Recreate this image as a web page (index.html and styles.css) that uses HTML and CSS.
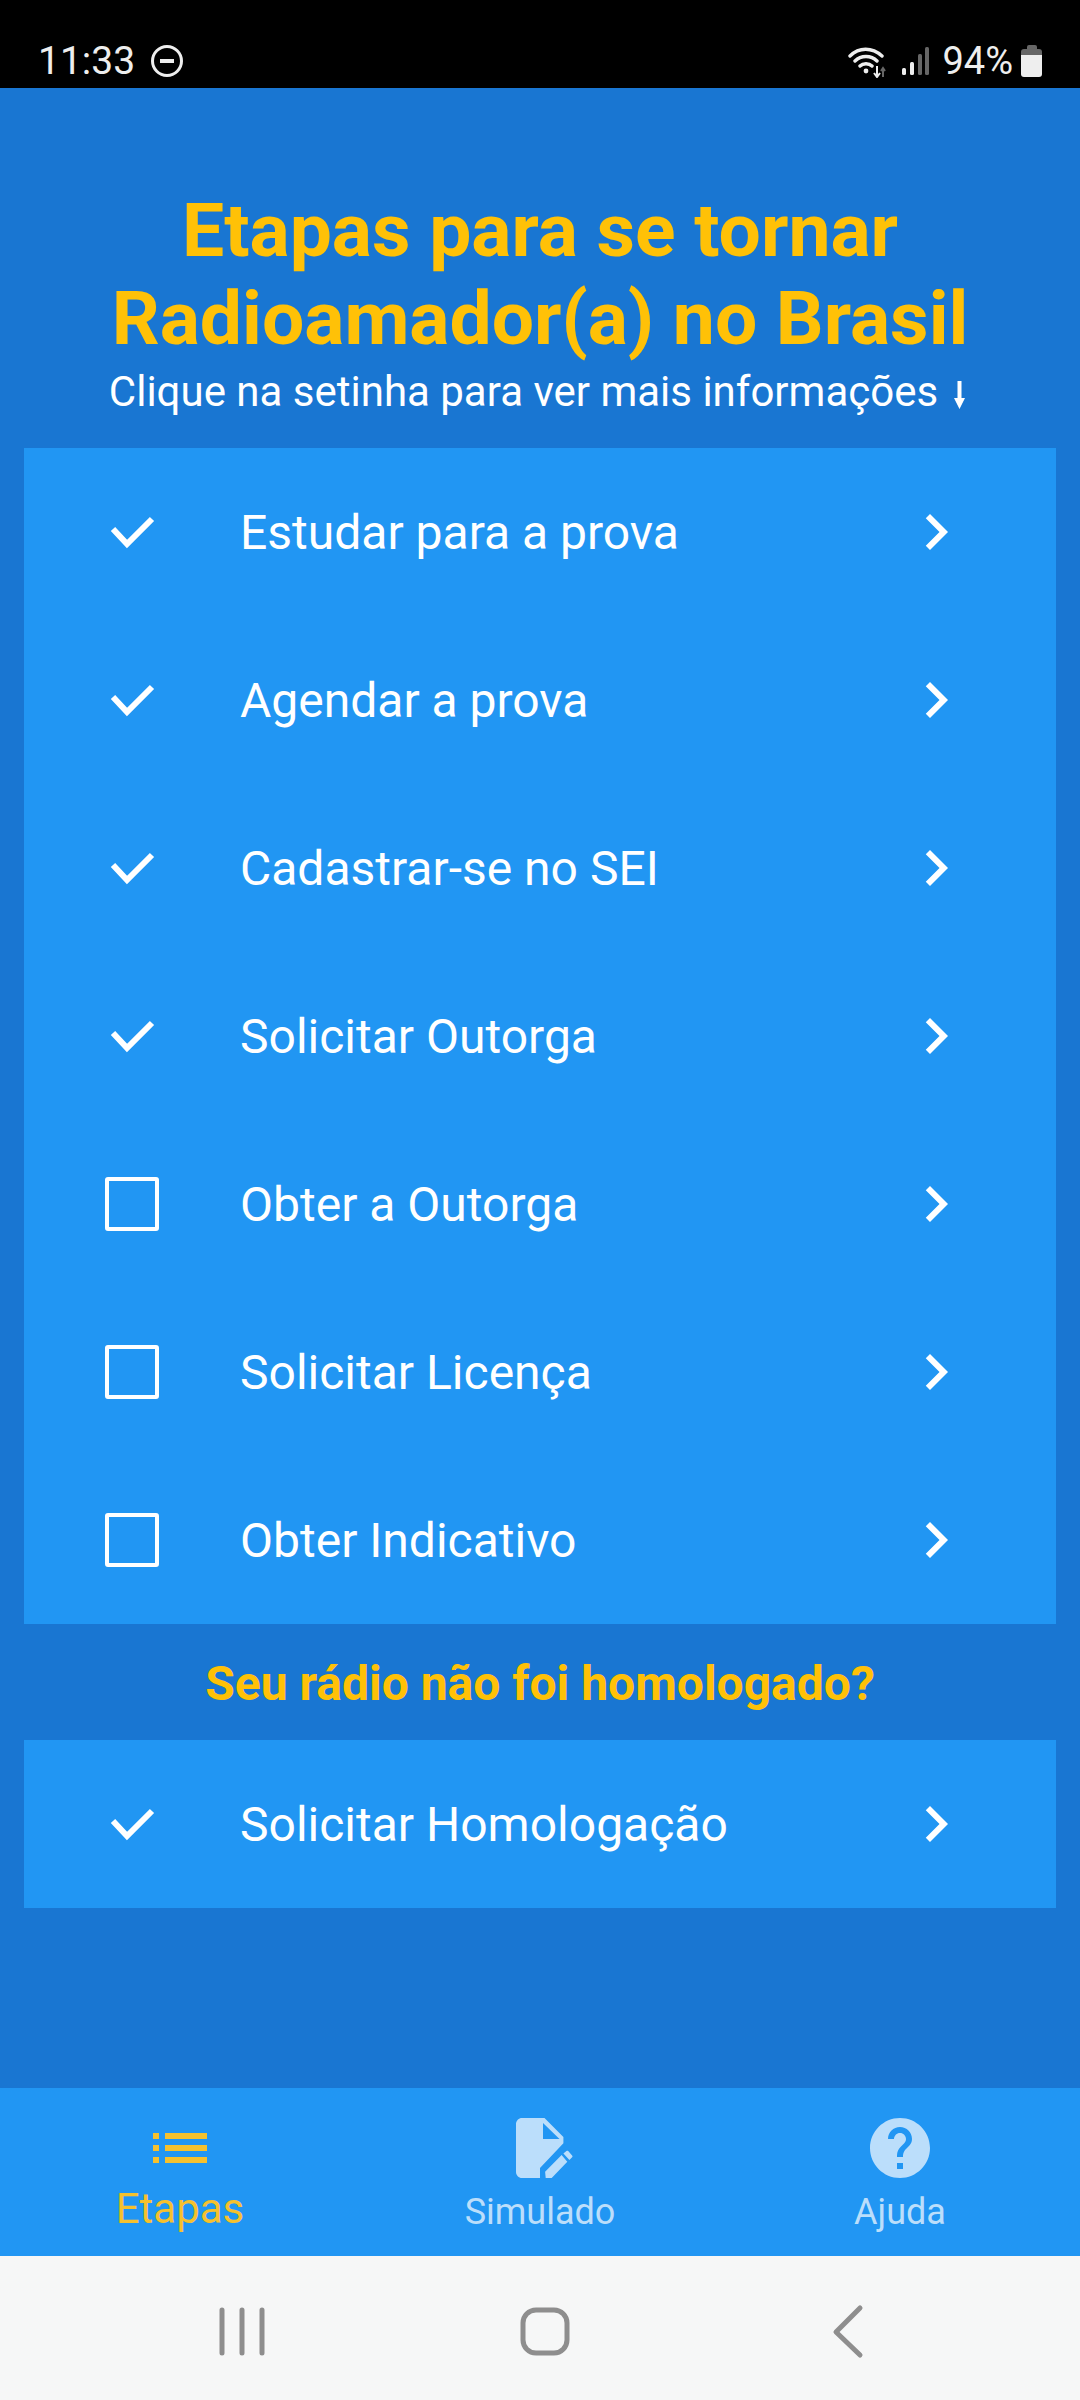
FILE: index.html
```html
<!DOCTYPE html>
<html lang="pt-BR">
<head>
    <meta charset="UTF-8">
    <meta name="viewport" content="width=device-width, initial-scale=1.0">
    <title>Etapas</title>
    <link rel="stylesheet" href="styles.css">
</head>
<body>
    <div id="app">
        <!-- Status bar -->
        <div class="status-bar">
            <div class="status-left">
                <span class="clock">11:33</span>
                <span class="dnd"></span>
            </div>
            <div class="status-right">
                <svg class="wifi" viewBox="0 0 38 33" width="38" height="33">
                    <path d="M2 11C11 2 24 2 34 11M7 16C13 10 23 10 29 16M12 21C15 18 21 18 24 21" fill="none" stroke="#eee" stroke-width="3.4" stroke-linecap="round"/>
                    <circle cx="18" cy="26" r="2.4" fill="#eee"/>
                    <path d="M29 21V31M26 28L29 32L32 28" fill="none" stroke="#eee" stroke-width="2"/>
                    <path d="M35 32V24M33 26L35 23L37 26" fill="none" stroke="#666" stroke-width="2"/>
                </svg>
                <svg class="signal" viewBox="0 0 28 30" width="28" height="30">
                    <rect x="1" y="22" width="4" height="7" rx="1.5" fill="#eee"/>
                    <rect x="9" y="16" width="4" height="13" rx="1.5" fill="#eee"/>
                    <rect x="17" y="8" width="4" height="21" rx="1.5" fill="#666"/>
                    <rect x="24" y="1" width="4" height="28" rx="1.5" fill="#666"/>
                </svg>
                <span class="battery-text">94%</span>
                <span class="battery"><span class="battery-cap"></span><span class="battery-fill"></span></span>
            </div>
        </div>

        <!-- Main content -->
        <main>
            <h1>Etapas para se tornar<br>Radioamador(a) no Brasil</h1>
            <p class="hint">Clique na setinha para ver mais informações<svg class="hint-arrow" viewBox="0 0 11 28"><path d="M3.5 0h4v17H11L5.5 28 0 17h3.5z"/></svg></p>

            <section class="step-panel">
                <div class="step">
                    <span class="step-mark"><svg viewBox="0 0 72 72"><path class="tick" d="M17 33L31 48L56 23"/></svg></span>
                    <span class="step-name">Estudar para a prova</span>
                    <svg class="chevron" viewBox="0 0 24 24"><path d="M10 6L8.59 7.41 13.17 12l-4.58 4.59L10 18l6-6z"/></svg>
                </div>
                <div class="step">
                    <span class="step-mark"><svg viewBox="0 0 72 72"><path class="tick" d="M17 33L31 48L56 23"/></svg></span>
                    <span class="step-name">Agendar a prova</span>
                    <svg class="chevron" viewBox="0 0 24 24"><path d="M10 6L8.59 7.41 13.17 12l-4.58 4.59L10 18l6-6z"/></svg>
                </div>
                <div class="step">
                    <span class="step-mark"><svg viewBox="0 0 72 72"><path class="tick" d="M17 33L31 48L56 23"/></svg></span>
                    <span class="step-name">Cadastrar-se no SEI</span>
                    <svg class="chevron" viewBox="0 0 24 24"><path d="M10 6L8.59 7.41 13.17 12l-4.58 4.59L10 18l6-6z"/></svg>
                </div>
                <div class="step">
                    <span class="step-mark"><svg viewBox="0 0 72 72"><path class="tick" d="M17 33L31 48L56 23"/></svg></span>
                    <span class="step-name">Solicitar Outorga</span>
                    <svg class="chevron" viewBox="0 0 24 24"><path d="M10 6L8.59 7.41 13.17 12l-4.58 4.59L10 18l6-6z"/></svg>
                </div>
                <div class="step">
                    <span class="step-mark"><span class="box"></span></span>
                    <span class="step-name">Obter a Outorga</span>
                    <svg class="chevron" viewBox="0 0 24 24"><path d="M10 6L8.59 7.41 13.17 12l-4.58 4.59L10 18l6-6z"/></svg>
                </div>
                <div class="step">
                    <span class="step-mark"><span class="box"></span></span>
                    <span class="step-name">Solicitar Licença</span>
                    <svg class="chevron" viewBox="0 0 24 24"><path d="M10 6L8.59 7.41 13.17 12l-4.58 4.59L10 18l6-6z"/></svg>
                </div>
                <div class="step">
                    <span class="step-mark"><span class="box"></span></span>
                    <span class="step-name">Obter Indicativo</span>
                    <svg class="chevron" viewBox="0 0 24 24"><path d="M10 6L8.59 7.41 13.17 12l-4.58 4.59L10 18l6-6z"/></svg>
                </div>
            </section>

            <h2>Seu rádio não foi homologado?</h2>

            <section class="step-panel">
                <div class="step">
                    <span class="step-mark"><svg viewBox="0 0 72 72"><path class="tick" d="M17 33L31 48L56 23"/></svg></span>
                    <span class="step-name">Solicitar Homologação</span>
                    <svg class="chevron" viewBox="0 0 24 24"><path d="M10 6L8.59 7.41 13.17 12l-4.58 4.59L10 18l6-6z"/></svg>
                </div>
            </section>
        </main>

        <!-- Bottom tabs -->
        <nav class="tabs">
            <button class="tab active">
                <svg viewBox="0 0 24 24"><path d="M3 13h2v-2H3v2zm0 4h2v-2H3v2zm0-8h2V7H3v2zm4 4h14v-2H7v2zm0 4h14v-2H7v2zM7 7v2h14V7H7z"/></svg>
                <span>Etapas</span>
            </button>
            <button class="tab">
                <svg viewBox="0 0 24 24">
                    <path fill-rule="evenodd" d="M6 2h7.5l6.3 6.3v2.1L12 18.7V22H6c-1.1 0-2-.9-2-2V4c0-1.1.9-2 2-2zM13 3.7V9h5.5z"/>
                    <path d="M13.9 22l-.2-2.1 5.5-5.6 1.9 2.3-5.2 5.4zM19.8 13.8l1-.8c.2-.1.4-.1.6 0l1.3 1.5c.2.2.2.4 0 .6l-.9.9z"/>
                </svg>
                <span>Simulado</span>
            </button>
            <button class="tab">
                <svg viewBox="0 0 24 24"><path d="M12 2C6.48 2 2 6.48 2 12s4.48 10 10 10 10-4.48 10-10S17.52 2 12 2zm1 17h-2v-2h2v2zm2.07-7.75l-.9.92C13.45 12.9 13 13.5 13 15h-2v-.5c0-1.1.45-2.1 1.17-2.83l1.24-1.26c.37-.36.59-.86.59-1.41 0-1.1-.9-2-2-2s-2 .9-2 2H8c0-2.21 1.79-4 4-4s4 1.79 4 4c0 .88-.36 1.68-.93 2.25z"/></svg>
                <span>Ajuda</span>
            </button>
        </nav>

        <!-- System navigation -->
        <div class="system-nav">
            <svg viewBox="0 0 360 144"><path d="M222 54V97M242 54V97M262 54V97"/></svg>
            <svg viewBox="0 0 360 144"><rect x="163" y="54" width="44" height="43" rx="13"/></svg>
            <svg viewBox="0 0 360 144"><path d="M140 52L116 76L140 99"/></svg>
        </div>
    </div>
</body>
</html>
```

FILE: styles.css
```css
/* General */
body {
    margin: 0;
    font-family: Roboto, "Liberation Sans", sans-serif;
    background-color: #1976d2;
}

#app {
    display: flex;
    flex-direction: column;
    height: 2400px;
    overflow: hidden;
}

/* Status bar */
.status-bar {
    display: flex;
    justify-content: space-between;
    align-items: center;
    height: 88px;
    padding: 34px 38px 0 38px;
    box-sizing: border-box;
    background-color: #000;
    color: #eee;
}

.status-left,
.status-right {
    display: flex;
    align-items: center;
}

.clock {
    font-size: 39px;
    margin-right: 16px;
}

.dnd {
    position: relative;
    width: 32px;
    height: 32px;
    box-sizing: border-box;
    border: 3px solid #eee;
    border-radius: 50%;
}

.dnd::after {
    content: "";
    position: absolute;
    left: 6px;
    right: 6px;
    top: 11px;
    height: 4px;
    background-color: #eee;
}

.wifi {
    margin-right: 15px;
}

.signal {
    margin-right: 13px;
}

.battery-text {
    font-size: 38px;
    margin-right: 8px;
}

.battery {
    display: flex;
    flex-direction: column;
    align-items: center;
    width: 21px;
}

.battery-cap {
    width: 10px;
    height: 4px;
    background-color: #666;
    border-radius: 2px 2px 0 0;
}

.battery-fill {
    width: 21px;
    height: 28px;
    border-radius: 3px;
    background: linear-gradient(#666 0, #666 6px, #eee 6px);
}

/* Main content */
main {
    flex: 1;
    padding: 98px 24px 0;
}

h1 {
    margin: 0;
    color: #ffc107;
    font-size: 75px;
    font-weight: 700;
    line-height: 88px;
    text-align: center;
}

.hint {
    margin: 0 0 26px;
    color: #fff;
    font-size: 42px;
    line-height: 60px;
    text-align: center;
}

.hint-arrow {
    width: 11px;
    height: 28px;
    margin: 0 6px 0 16px;
    fill: #fff;
    vertical-align: -3px;
}

h2 {
    margin: 0;
    padding-top: 3px;
    color: #ffc107;
    font-size: 48px;
    font-weight: 700;
    line-height: 113px;
    text-align: center;
}

/* Step rows */
.step-panel {
    background-color: #2196f3;
}

.step {
    display: flex;
    align-items: center;
    height: 168px;
    padding: 0 84px 0 72px;
}

.step-mark {
    display: flex;
    justify-content: center;
    align-items: center;
    width: 72px;
    height: 72px;
    margin-right: 72px;
}

.step-mark svg {
    width: 72px;
    height: 72px;
}

.tick {
    fill: none;
    stroke: #fff;
    stroke-width: 6;
}

.box {
    width: 54px;
    height: 54px;
    box-sizing: border-box;
    border: 4px solid #fff;
    border-radius: 3px;
}

.step-name {
    flex: 1;
    color: #fff;
    font-size: 48px;
}

.chevron {
    width: 72px;
    height: 72px;
    fill: #fff;
}

/* Bottom tabs */
.tabs {
    display: flex;
    height: 168px;
    background-color: #2196f3;
}

.tab {
    flex: 1;
    display: flex;
    flex-direction: column;
    align-items: center;
    height: 168px;
    padding: 24px 0 0;
    border: none;
    background: none;
    color: #bbdefb;
    font-family: inherit;
    font-size: 36px;
}

.tab svg {
    width: 72px;
    height: 72px;
    fill: currentColor;
}

.tab span {
    margin-top: 7px;
}

.tab.active {
    color: #f5c12e;
    font-size: 42px;
}

.tab.active span {
    margin-top: 0;
}

/* System navigation */
.system-nav {
    display: flex;
    height: 144px;
    background-color: #f6f7f7;
}

.system-nav svg {
    width: 360px;
    height: 144px;
    fill: none;
    stroke: #8e8e8e;
    stroke-width: 5;
    stroke-linecap: round;
    stroke-linejoin: round;
}
```
